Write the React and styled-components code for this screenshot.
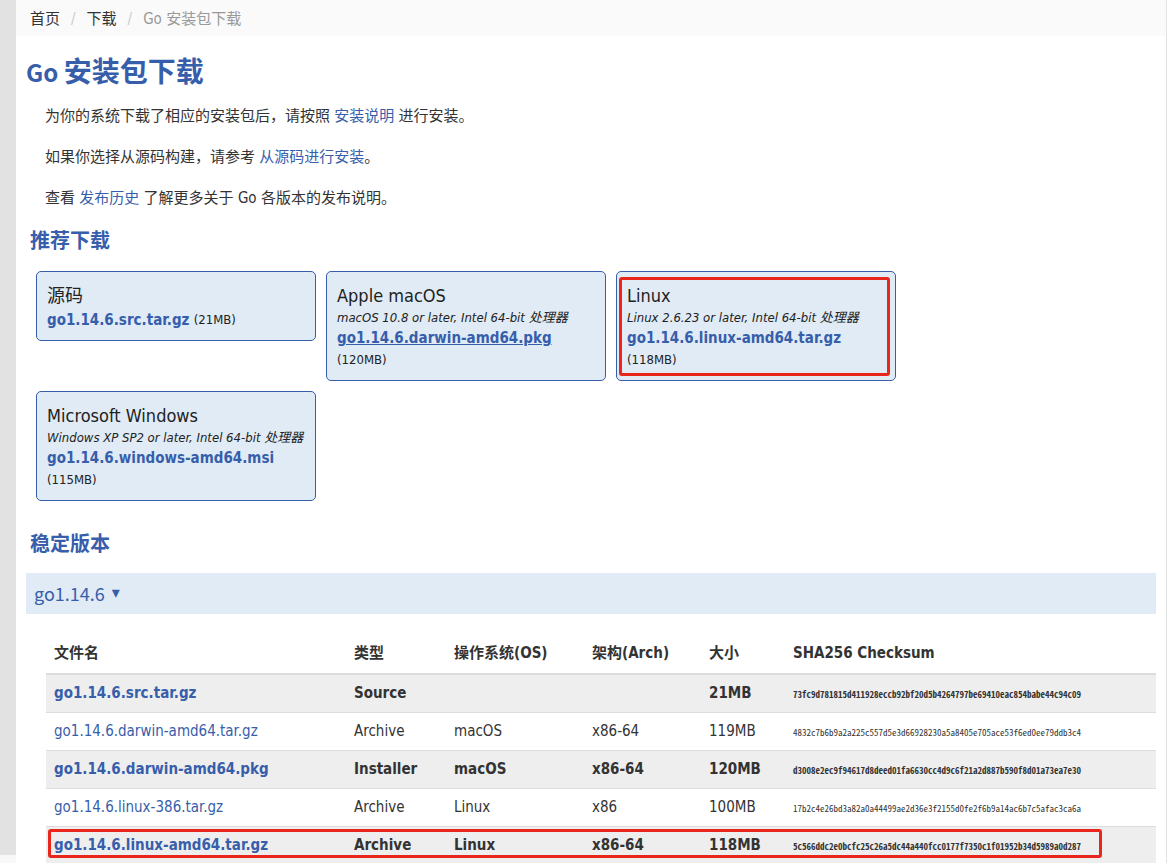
import React from 'react';
import styled, {createGlobalStyle} from "styled-components";


const recommended = [
    {title: "源码", file: "go1.14.6.src.tar.gz", size: "21MB"},
    {title: "Apple macOS", note: "macOS 10.8 or later, Intel 64-bit 处理器", file: "go1.14.6.darwin-amd64.pkg", size: "120MB", underlined: true},
    {title: "Linux", note: "Linux 2.6.23 or later, Intel 64-bit 处理器", file: "go1.14.6.linux-amd64.tar.gz", size: "118MB", marked: true},
    {title: "Microsoft Windows", note: "Windows XP SP2 or later, Intel 64-bit 处理器", file: "go1.14.6.windows-amd64.msi", size: "115MB"},
];

const files = [
    {file: "go1.14.6.src.tar.gz", kind: "Source", os: "", arch: "", size: "21MB", sum: "73fc9d781815d411928eccb92bf20d5b4264797be69410eac854babe44c94c09", featured: true},
    {file: "go1.14.6.darwin-amd64.tar.gz", kind: "Archive", os: "macOS", arch: "x86-64", size: "119MB", sum: "4832c7b6b9a2a225c557d5e3d66928230a5a8405e705ace53f6ed0ee79ddb3c4"},
    {file: "go1.14.6.darwin-amd64.pkg", kind: "Installer", os: "macOS", arch: "x86-64", size: "120MB", sum: "d3008e2ec9f94617d8deed01fa6630cc4d9c6f21a2d887b590f8d01a73ea7e30", featured: true},
    {file: "go1.14.6.linux-386.tar.gz", kind: "Archive", os: "Linux", arch: "x86", size: "100MB", sum: "17b2c4e26bd3a82a0a44499ae2d36e3f2155d0fe2f6b9a14ac6b7c5afac3ca6a"},
    {file: "go1.14.6.linux-amd64.tar.gz", kind: "Archive", os: "Linux", arch: "x86-64", size: "118MB", sum: "5c566ddc2e0bcfc25c26a5dc44a440fcc0177f7350c1f01952b34d5989a0d287", featured: true, marked: true},
];

const App = () => {
    return(
        <>
            <GlobalStyle/>
            <Layout>
                <Gutter><GutterTab/></Gutter>
                <Page>
                    <Breadcrumb aria-label="breadcrumb">
                        <Crumb href="#home">首页</Crumb>
                        <Slash>/</Slash>
                        <Crumb href="#dl">下载</Crumb>
                        <Slash>/</Slash>
                        <Current>Go 安装包下载</Current>
                    </Breadcrumb>
                    <Content>
                        <Title><Latin>Go </Latin>安装包下载</Title>
                        <Paragraph>为你的系统下载了相应的安装包后，请按照 <Link href="#install">安装说明</Link> 进行安装。</Paragraph>
                        <Paragraph>如果你选择从源码构建，请参考 <Link href="#source">从源码进行安装</Link>。</Paragraph>
                        <Paragraph>查看 <Link href="#release">发布历史</Link> 了解更多关于 Go 各版本的发布说明。</Paragraph>
                        <Subtitle>推荐下载</Subtitle>
                        <Cards>
                            {recommended.map((item)=>(
                                <Card key={item.file}>
                                    <Platform>{item.title}</Platform>
                                    {item.note && <Note>{item.note}</Note>}
                                    <Download>
                                        <FileLink href="#file" $bold $underlined={item.underlined}>{item.file}</FileLink> <Size>({item.size})</Size>
                                    </Download>
                                    {item.marked && <CardMark/>}
                                </Card>
                            ))}
                        </Cards>
                        <Subtitle>稳定版本</Subtitle>
                        <VersionBar type="button">go1.14.6 <Arrow>▾</Arrow></VersionBar>
                        <FileTable>
                            <colgroup>
                                <Col $width={300}/>
                                <Col $width={100}/>
                                <Col $width={138}/>
                                <Col $width={117}/>
                                <Col $width={84}/>
                                <col/>
                            </colgroup>
                            <thead>
                                <tr>
                                    <HeadCell>文件名</HeadCell>
                                    <HeadCell>类型</HeadCell>
                                    <HeadCell>操作系统(OS)</HeadCell>
                                    <HeadCell>架构(Arch)</HeadCell>
                                    <HeadCell>大小</HeadCell>
                                    <HeadCell>SHA256 Checksum</HeadCell>
                                </tr>
                            </thead>
                            <tbody>
                                {files.map((row)=>(
                                    <Row key={row.file} $featured={row.featured}>
                                        <Cell><FileLink href="#file" $bold={row.featured}>{row.file}</FileLink>{row.marked && <RowMark/>}</Cell>
                                        <Cell>{row.kind}</Cell>
                                        <Cell>{row.os}</Cell>
                                        <Cell>{row.arch}</Cell>
                                        <Cell>{row.size}</Cell>
                                        <Cell><Checksum>{row.sum}</Checksum></Cell>
                                    </Row>
                                ))}
                            </tbody>
                        </FileTable>
                    </Content>
                </Page>
            </Layout>
        </>
    )
}


//styled components
const GlobalStyle = createGlobalStyle`
    *{
        box-sizing: border-box;
    }
    html{
        scrollbar-width: none;
    }
    body{
        margin: 0;
        background: #fff;
        color: #333;
        font-family: "DejaVu Sans Condensed", "Noto Sans CJK SC", sans-serif;
        font-size: 15px;
        line-height: 21px;
    }
`

const Layout = styled.div`
    display: flex;
    min-height: 100vh;
`

const Gutter = styled.div`
    display: flex;
    flex-direction: column;
    justify-content: flex-end;
    flex: 0 0 16px;
    background: #e2e2e2;
`

const GutterTab = styled.div`
    height: 10px;
    background: #f8f8f8;
`

const Page = styled.main`
    flex: 1;
    min-width: 0;
    border-right: 1px solid #e2e2e2;
`

const Breadcrumb = styled.nav`
    display: flex;
    align-items: center;
    height: 36px;
    padding: 2px 14px 0;
    background: #fafafa;
`

const Crumb = styled.a`
    color: #333;
    text-decoration: none;
`

const Slash = styled.span`
    padding: 0 11px;
    color: #ccc;
`

const Current = styled.span`
    color: #999;
`

const Content = styled.div`
    padding: 14px 10px 0;
`

const Title = styled.h1`
    margin: 0;
    color: #375eab;
    font-family: "Noto Sans CJK SC", sans-serif;
    font-size: 28px;
    line-height: 40px;
`

const Latin = styled.span`
    font-size: 24px;
    line-height: 24px;
`

const Paragraph = styled.p`
    margin: 16px 19px 20px;

    & + &{
        margin-top: 0;
    }
`

const Subtitle = styled.h2`
    margin: 0 4px;
    color: #375eab;
    font-size: 20px;
    line-height: 24px;
`

const Cards = styled.div`
    display: flex;
    flex-wrap: wrap;
    align-items: flex-start;
    gap: 10px;
    max-width: 900px;
    padding: 18px 10px 31px;
`

const Card = styled.section`
    position: relative;
    width: 280px;
    padding: 11px 10px 9px;
    border: 1px solid #375eab;
    border-radius: 5px;
    background: #e0ebf5;
    color: #222;
`

const Platform = styled.div`
    font-size: 18px;
    line-height: 26px;
`

const Note = styled.div`
    font-size: 13px;
    font-style: italic;
    line-height: 18px;
    white-space: nowrap;
`

const Download = styled.div`
    line-height: 22px;
`

const Size = styled.span`
    display: inline-block;
    font-size: 13px;
    line-height: 22px;
    vertical-align: top;
`

const Link = styled.a`
    color: #375eab;
    text-decoration: none;
`

const FileLink = styled(Link)`
    font-weight: ${props => props.$bold ? "bold" : "normal"};
    text-decoration: ${props => props.$underlined ? "underline" : "none"};
`

const CardMark = styled.span`
    position: absolute;
    inset: 5px 5px 4px 2px;
    border: 3px solid #e8261b;
    border-radius: 3px;
    pointer-events: none;
`

const VersionBar = styled.button`
    display: flex;
    align-items: center;
    gap: 7px;
    width: 100%;
    height: 41px;
    margin: 17px 0 20px;
    padding: 0 8px 2px;
    border: 0;
    background: #e0ebf5;
    color: #375eab;
    font-family: "Noto Sans CJK SC", sans-serif;
    font-size: 18px;
    text-align: left;
`

const Arrow = styled.span`
    font-family: "DejaVu Sans", sans-serif;
    font-size: 16px;
    line-height: 16px;
`

const FileTable = styled.table`
    width: calc(100% - 20px);
    margin-left: 20px;
    border-collapse: separate;
    border-spacing: 0;
    table-layout: fixed;
`

const Col = styled.col`
    width: ${props => props.$width}px;
`

const HeadCell = styled.th`
    height: 41px;
    padding: 0 8px;
    border-bottom: 2px solid #ddd;
    text-align: left;
`

const Row = styled.tr`
    position: relative;
    height: 38px;
    background: ${props => props.$featured ? "#eee" : "#fff"};
    font-weight: ${props => props.$featured ? "bold" : "normal"};
`

const Cell = styled.td`
    padding: 0 8px;
    border-bottom: 1px solid #ddd;
    white-space: nowrap;
`

const Checksum = styled.span`
    font-family: "Noto Sans Mono CJK SC", "Liberation Mono", monospace;
    font-size: 9px;
`

const RowMark = styled.span`
    position: absolute;
    inset: 2px 54px 7px 2px;
    border: 3px solid #e8261b;
    border-radius: 3px;
    pointer-events: none;
`
export default App;
